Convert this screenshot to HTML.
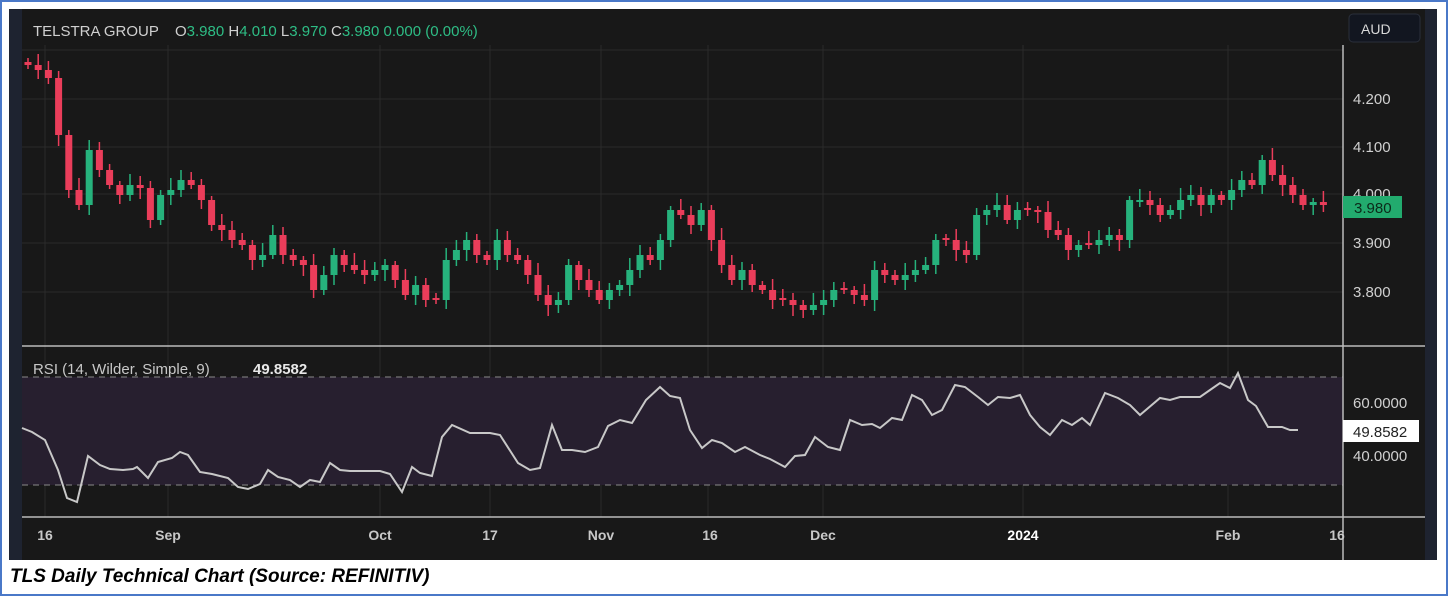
<!DOCTYPE html>
<html><head><meta charset="utf-8"><style>
html,body{margin:0;padding:0;background:#fff;}
body{width:1448px;height:596px;position:relative;overflow:hidden;font-family:"Liberation Sans",sans-serif;}
.frame{position:absolute;left:0;top:0;width:1444px;height:592px;border:2px solid #4a78c8;}
svg{position:absolute;left:0;top:0;}
.cap{position:absolute;left:10px;top:566px;font-size:19px;font-weight:bold;font-style:italic;color:#000;}
</style></head><body>
<div class="frame"></div>
<svg id="s" width="1448" height="596" xmlns="http://www.w3.org/2000/svg" font-family="Liberation Sans, sans-serif">
<rect x="9" y="9" width="1428" height="551" fill="#181818"/>
<rect x="9" y="9" width="13" height="551" fill="#1e2330"/>
<rect x="1425" y="9" width="12" height="551" fill="#1e2330"/>
<g id="grid" stroke="#2a2a2a" stroke-width="1"></g>
<rect x="22" y="377" width="1321" height="108" fill="#271f2f"/>
<line x1="22" y1="377" x2="1343" y2="377" stroke="#8a8a8a" stroke-dasharray="6,5"/>
<line x1="22" y1="485" x2="1343" y2="485" stroke="#8a8a8a" stroke-dasharray="6,5"/>
<g id="c"></g>
<polyline id="rsi" fill="none" stroke="#c8c8c8" stroke-width="2"/>
<line x1="22" y1="346" x2="1425" y2="346" stroke="#bbb" stroke-width="1.5"/>
<line x1="22" y1="517" x2="1425" y2="517" stroke="#bbb" stroke-width="1.5"/>
<line x1="1343" y1="45" x2="1343" y2="560" stroke="#bbb" stroke-width="1.5"/>
<text x="33" y="36" font-size="15" fill="#d0d0d0">TELSTRA GROUP</text>
<text x="175" y="36" font-size="15" fill="#d0d0d0">O<tspan fill="#2ebd85">3.980</tspan>  H<tspan fill="#2ebd85">4.010</tspan>  L<tspan fill="#2ebd85">3.970</tspan>  C<tspan fill="#2ebd85">3.980</tspan>  <tspan fill="#2ebd85">0.000 (0.00%)</tspan></text>
<text x="33" y="374" font-size="15" fill="#c8c8c8">RSI (14, Wilder, Simple, 9)</text>
<text x="253" y="374" font-size="15" fill="#e8e8e8" font-weight="bold">49.8582</text>
<rect x="1349" y="14" width="71" height="28" rx="4" fill="#121620" stroke="#2a2f3a"/>
<text x="1361" y="34" font-size="14" fill="#d8d8d8">AUD</text>
<g font-size="15" fill="#d0d0d0">
<text x="1353" y="104">4.200</text><text x="1353" y="152">4.100</text><text x="1353" y="199">4.000</text>
<text x="1353" y="248">3.900</text><text x="1353" y="297">3.800</text>
<text x="1353" y="408">60.0000</text><text x="1353" y="461">40.0000</text>
</g>
<rect x="1343" y="196" width="59" height="22" fill="#22ab6e"/>
<text x="1354" y="213" font-size="15" fill="#0c2a1a">3.980</text>
<rect x="1343" y="420" width="76" height="22" fill="#fff"/>
<text x="1353" y="437" font-size="15" fill="#222">49.8582</text>
<g font-size="14" fill="#c8c8c8" text-anchor="middle" font-weight="bold">
<text x="45" y="540">16</text><text x="168" y="540">Sep</text><text x="380" y="540">Oct</text>
<text x="490" y="540">17</text><text x="601" y="540">Nov</text><text x="710" y="540">16</text>
<text x="823" y="540">Dec</text><text x="1023" y="540" fill="#fff">2024</text><text x="1228" y="540">Feb</text>
<text x="1337" y="540">16</text>
</g>
</svg>
<div class="cap">TLS Daily Technical Chart (Source: REFINITIV)</div>
<script>
var NS="http://www.w3.org/2000/svg";
function el(p,t,a){var e=document.createElementNS(NS,t);for(var k in a)e.setAttribute(k,a[k]);p.insertBefore?p.appendChild(e):0;return e;}
var g=document.getElementById('grid');
[45,168,380,490,601,708,823,1023,1228].forEach(function(x){el(g,'line',{x1:x,y1:45,x2:x,y2:517});});
[50,99,147,194,243,292,403,456].forEach(function(y){el(g,'line',{x1:22,y1:y,x2:1343,y2:y});});
var cy=[65,70,78,135,190,205,150,170,185,195,185,188,220,195,190,180,185,200,225,230,240,245,260,255,235,255,260,265,290,275,255,265,270,275,270,265,280,295,285,300,300,260,250,240,255,260,240,255,260,275,295,305,300,265,280,290,300,290,285,270,255,260,240,210,215,225,210,240,265,280,270,285,290,300,300,305,310,305,300,290,290,295,300,270,275,280,275,270,265,240,240,250,255,215,210,205,220,210,210,212,230,235,250,245,245,240,235,240,200,200,205,215,210,200,195,205,195,200,190,180,185,160,175,185,195,205,202,205];
var c=document.getElementById('c');var prev=62;
for(var i=0;i<cy.length;i++){var x=28+i*10.2,o=prev,cl=cy[i];if(Math.abs(o-cl)<2)o=cl+(i%2?2:-2);
var up=cl<o,col=up?'#26b27c':'#ea3d5a';var t=Math.min(o,cl),b=Math.max(o,cl);
var wt=t-4-(i*7%9),wb=b+4+(i*5%8);
el(c,'line',{x1:x,y1:wt,x2:x,y2:wb,stroke:col,'stroke-width':1.5});
el(c,'rect',{x:x-3.5,y:t,width:7,height:Math.max(b-t,2),fill:col});prev=cl;}
var pts="22,428 32,432 45,440 58,470 67,498 77,502 88,456 100,465 110,469 123,470 133,469 137,467 148,478 158,462 172,458 180,452 188,455 200,472 212,474 228,478 238,487 248,489 260,484 268,470 278,477 290,480 300,487 310,480 320,482 330,463 340,470 350,471 360,471 370,471 380,471 390,474 402,492 412,467 420,473 432,476 442,437 452,425 470,433 490,433 500,435 518,463 530,470 540,468 552,425 562,450 572,450 585,452 598,447 608,426 620,420 632,423 646,400 660,387 670,396 680,398 690,430 702,448 712,440 722,443 735,452 745,447 760,455 770,459 785,467 795,456 805,455 815,437 828,447 840,450 850,420 862,425 872,424 880,428 892,418 902,420 912,395 922,400 932,415 942,410 955,385 965,387 978,397 988,405 998,397 1010,398 1020,395 1030,415 1040,427 1050,435 1062,420 1072,425 1082,418 1090,425 1105,393 1118,398 1130,405 1140,415 1160,398 1170,400 1180,397 1200,397 1210,390 1220,383 1230,388 1238,373 1248,400 1256,406 1268,427 1282,427 1290,430 1298,430";
document.getElementById('rsi').setAttribute('points',pts);
</script>
</body></html>
